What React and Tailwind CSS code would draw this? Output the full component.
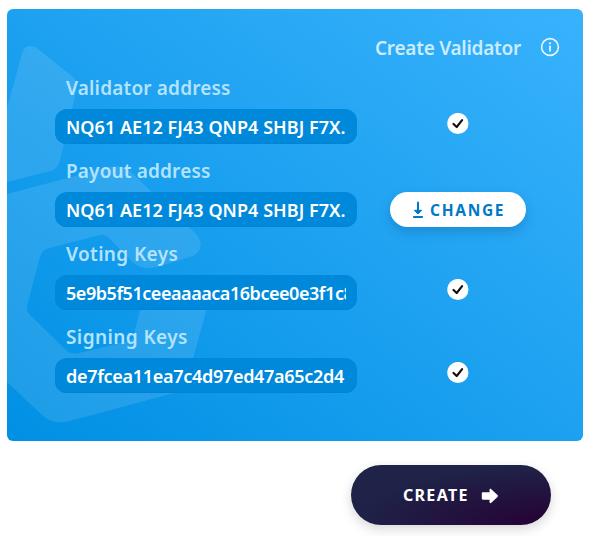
const rows = [
  { label: 'Validator address', labelTracking: 'tracking-[0.17px]', value: 'NQ61 AE12 FJ43 QNP4 SHBJ F7X.', valueTracking: 'tracking-[0.05px]', done: true },
  { label: 'Payout address', labelTracking: 'tracking-[0.15px]', value: 'NQ61 AE12 FJ43 QNP4 SHBJ F7X.', valueTracking: 'tracking-[0.05px]', done: false },
  { label: 'Voting Keys', labelTracking: 'tracking-[0.36px]', value: '5e9b5f51ceeaaaaca16bcee0e3f1c8', valueTracking: 'tracking-[-0.46px]', done: true },
  { label: 'Signing Keys', labelTracking: 'tracking-[0.4px]', value: 'de7fcea11ea7c4d97ed47a65c2d4', valueTracking: 'tracking-[-0.3px]', done: true },
];

function HexagonPattern() {
  return (
    <svg className="pointer-events-none absolute inset-0" width="576" height="432" viewBox="7 9 576 432">
      <g fill="#fff" fillOpacity="0.11">
        <path d="M7 108 L22.500 52 Q26 43 36 47.500 L73 77 Q77.500 81 76.500 90 L60 160 Q58 169 50 171 L7 182Z" />
        <path d="M7 194 L109 167 Q121 164 131 172 L197 235 Q206 248 193 256 L157 267 Q143 271 132 262 L110 239 Q105 233 98 235.500 L48 248.500 Q42 250 40 257 L27.500 304 Q26 311 30 315 L65 349 Q70 354.500 77 353.500 L128 341 Q133 340 134 334 L140 310 L144 296 Q145 289 152 287 L190 276 Q213 269 209 300 L193 359 Q188 390 170 394 L68 421.500 Q54 425 43 416 L7 382Z" />
      </g>
    </svg>
  );
}

function Check() {
  return (
    <svg width="22" height="22" viewBox="0 0 22 22">
      <circle cx="10.900" cy="10.500" r="10.600" fill="#fff" />
      <path d="M6.500 11 L9.700 14 L15.100 7.100" fill="none" stroke="#111" strokeWidth="2.200" strokeLinecap="round" strokeLinejoin="round" />
    </svg>
  );
}

export default function App() {
  return (
    <div className="h-[536px] w-[589px] overflow-hidden bg-white pt-[9px] pl-[7px] font-['Noto_Sans',sans-serif] font-semibold">
      <section className="relative h-[432px] w-[576px] overflow-hidden rounded-[6px] bg-[linear-gradient(to_top_right,#0090e4,#39b2fc)]">
        <HexagonPattern />
        <div className="relative">
          <header className="flex h-[62px] items-center justify-end pt-[15px] pr-[23px]">
            <h1 className="mr-[19px] text-[19px] leading-6 tracking-[-0.26px] whitespace-nowrap text-[#caecff]">Create Validator</h1>
            <svg width="20" height="20" viewBox="0 0 20 20" className="mt-[-1px] block">
              <circle cx="10" cy="10" r="8.400" fill="none" stroke="#e6f6ff" strokeWidth="1.600" />
              <circle cx="10" cy="6.300" r="1.100" fill="#e6f6ff" />
              <path d="M10 9.300v4.500" stroke="#e6f6ff" strokeWidth="1.800" strokeLinecap="round" />
            </svg>
          </header>
          {rows.map((row) => (
            <div key={row.label} className="flex h-[83px] pt-[4px] pl-12">
              <div className="w-[302px]">
                <div className={'h-[34px] pl-[11px] text-[19px] leading-[26px] whitespace-nowrap text-[#b4e3ff] ' + row.labelTracking}>{row.label}</div>
                <div className="h-[35px] rounded-[12px] bg-[#0089da] px-[11px] shadow-[inset_0_-1px_0_#0083d3]">
                  <div className={'h-[35px] overflow-hidden text-[18px] leading-[37px] whitespace-nowrap text-white ' + row.valueTracking}>{row.value}</div>
                </div>
              </div>
              <div className="flex h-[69px] w-[202px] items-end justify-center">
                {row.done ? (
                  <div className="flex h-[31px] items-start"><Check /></div>
                ) : (
                  <button className="flex h-[35px] w-[136px] items-center rounded-full bg-white pl-[22px] text-[15.500px] tracking-[1.700px] text-[#0079c7] shadow-[0_5px_12px_rgba(0,50,110,0.22)]">
                    <svg width="12" height="18" viewBox="0 0 12 18" className="mr-[6px]">
                      <path d="M6 1.500v9M1.900 16h8.200" fill="none" stroke="currentColor" strokeWidth="2" strokeLinecap="round" />
                      <path d="M2.200 9.300h7.600L6 13Z" fill="currentColor" stroke="currentColor" strokeLinejoin="round" />
                    </svg>
                    <span className="pt-[2px] font-bold">CHANGE</span>
                  </button>
                )}
              </div>
            </div>
          ))}
        </div>
      </section>
      <button className="mt-6 ml-[344px] flex h-[60px] w-[200px] items-center rounded-full bg-[radial-gradient(100%_100%_at_100%_100%,#260133_0%,#1f2348_100%)] pl-[52px] text-white shadow-[0_4px_12px_rgba(0,0,0,0.16)]">
        <span className="w-[78px] text-left text-[16px] font-bold tracking-[1.300px]">CREATE</span>
        <svg width="18" height="16" viewBox="0 0 18 16" className="mt-[2px]">
          <path d="M2 4.200h6.500V2c0-1.100 1-1.500 1.800-.8l6.200 5.900c.6.600.6 1.200 0 1.800l-6.200 5.900c-.8.700-1.800.3-1.800-.8v-2.200H2c-.7 0-1.200-.5-1.200-1.200V5.400c0-.7.5-1.200 1.200-1.200z" fill="#fff" />
        </svg>
      </button>
    </div>
  );
}
